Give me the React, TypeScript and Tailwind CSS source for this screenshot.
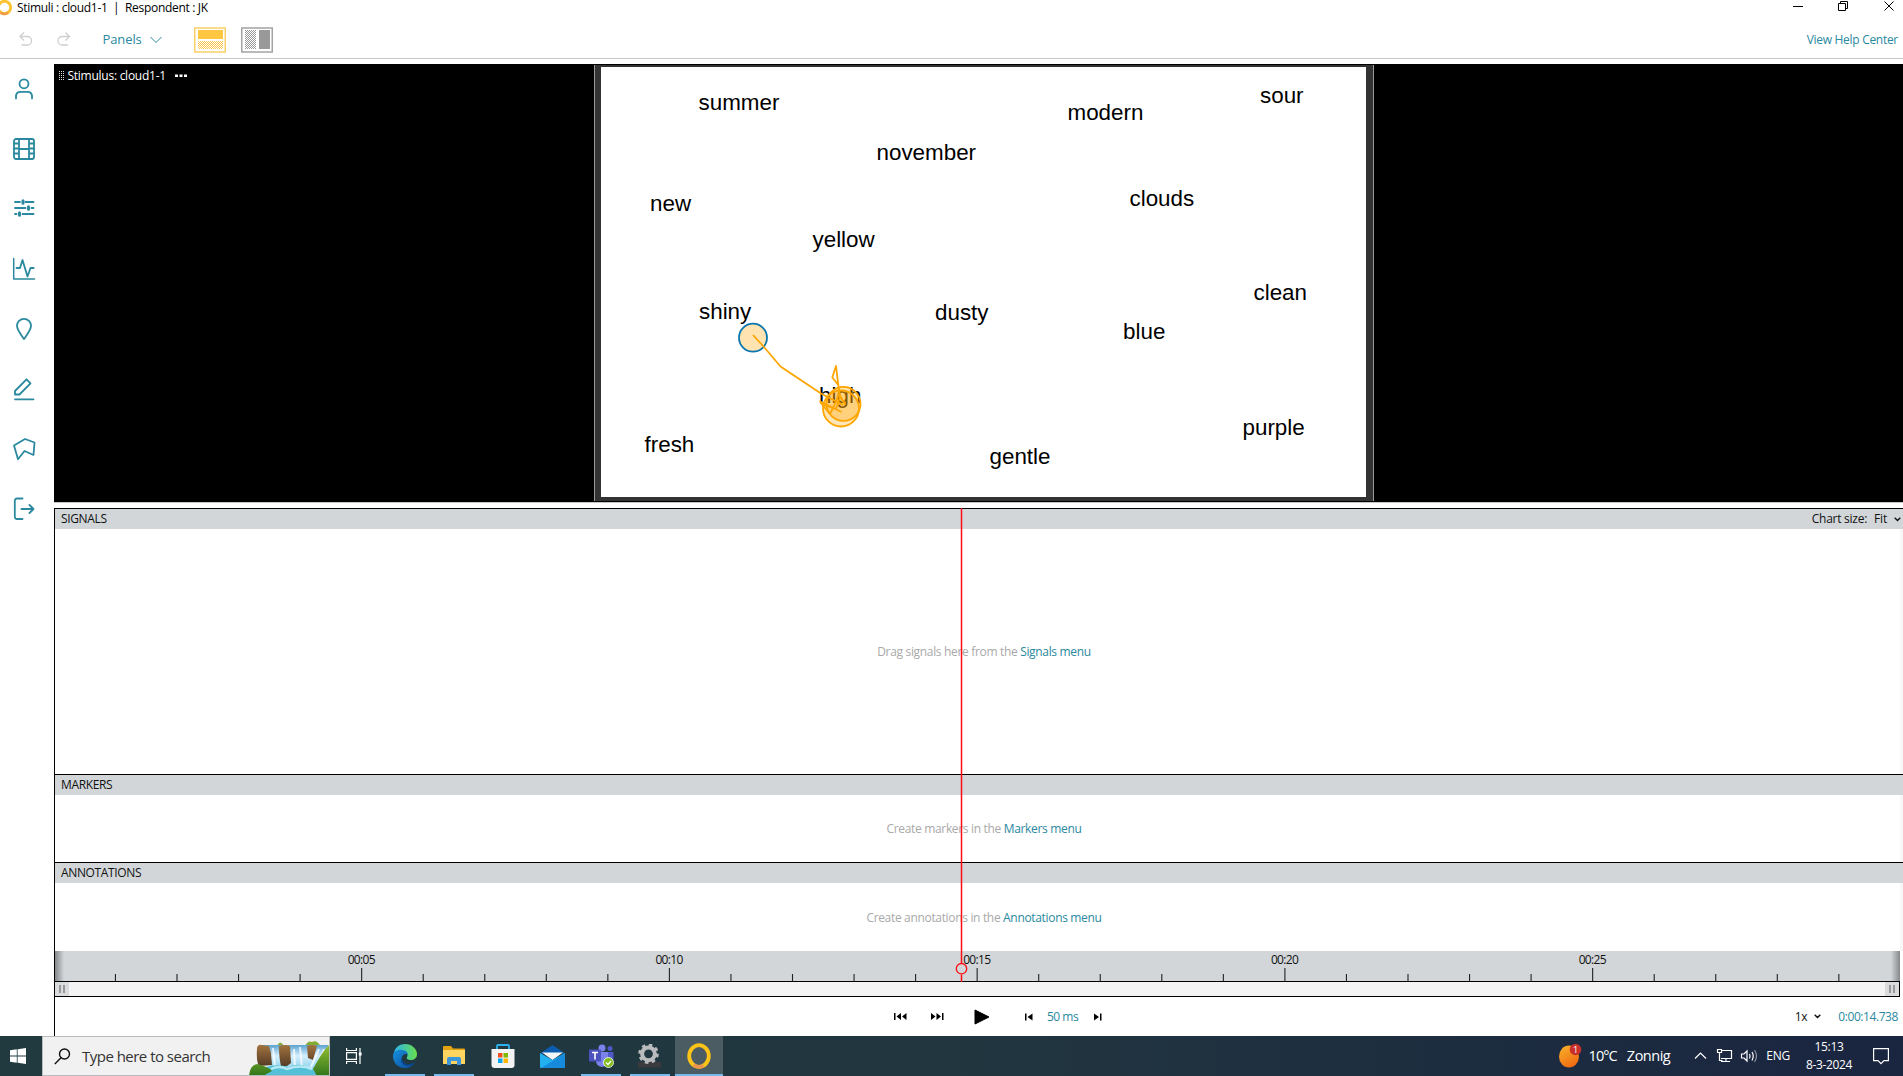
import type { ReactNode } from "react";

const WORDS = [
  { text: "summer", x: 97.5, y: 25 },
  { text: "modern", x: 466.5, y: 34.5 },
  { text: "sour", x: 659, y: 17.5 },
  { text: "november", x: 275.5, y: 75 },
  { text: "new", x: 49, y: 126 },
  { text: "clouds", x: 528.5, y: 121 },
  { text: "yellow", x: 211.5, y: 162 },
  { text: "clean", x: 652.5, y: 215 },
  { text: "shiny", x: 98, y: 234 },
  { text: "dusty", x: 334, y: 235 },
  { text: "blue", x: 522, y: 254 },
  { text: "high", x: 218, y: 318 },
  { text: "purple", x: 641.5, y: 350 },
  { text: "fresh", x: 43.5, y: 367 },
  { text: "gentle", x: 388.5, y: 379 },
];

function SideIcon({ children }: { children: ReactNode }) {
  return (
    <button className="flex h-[60px] w-12 items-center justify-center">
      <svg width="24" height="24" viewBox="0 0 24 24" fill="none" stroke="#2a899e" strokeWidth="1.8" strokeLinejoin="round" strokeLinecap="round">
        {children}
      </svg>
    </button>
  );
}

function Sidebar() {
  return (
    <nav className="flex w-[54px] shrink-0 flex-col">
      <SideIcon>
        <circle cx="12" cy="6.8" r="4.5" />
        <path d="M4 21.500v-3a4.500 4.500 0 0 1 4.500-3.700h7a4.500 4.500 0 0 1 4.500 3.700v3" />
      </SideIcon>
      <SideIcon>
        <rect x="2" y="2" width="20" height="20" rx="2" />
        <path d="M7 2v20M17 2v20M7 12h10M2 6.500h5M2 11.500h5M2 16.500h5M17 6.500h5M17 11.500h5M17 16.500h5" />
      </SideIcon>
      <SideIcon>
        <path d="M3 5h5M13.500 5H21.500M3 11H13.500M19.500 11H21.500M3 17H4.500M10.500 17H21.500" />
        <path d="M11 3.700v2.600M16.500 9.700v2.600M7.500 15.700v2.600" strokeWidth="3" />
      </SideIcon>
      <SideIcon>
        <path d="M1.700 1.500V22H22.500" strokeWidth="1.500" />
        <path d="M4.500 11h3.500L10.500 3l5 16.500L18.500 11h3.200" />
      </SideIcon>
      <SideIcon>
        <path d="M12 22C9 17.500 5 13 5 8.800a7 7 0 0 1 14 0C19 13 15 17.500 12 22Z" />
      </SideIcon>
      <SideIcon>
        <path d="M3 22.300h18.500M3 17.500v-3.500L14.500 2.300l4 4L7.500 17.500Z" />
      </SideIcon>
      <SideIcon>
        <path d="M2 8.500 13 2l9.500 3.500L21.500 18l-9-4L6 22.200Z" />
      </SideIcon>
      <SideIcon>
        <path d="M10.500 1.500H5a2.200 2.200 0 0 0-2.200 2.200v16A2.200 2.200 0 0 0 5 22h5.500M9.500 12h12M17.500 8l4 4-4 4" />
      </SideIcon>
    </nav>
  );
}

function Header() {
  return (
    <header className="h-[59px] border-b border-[#c8c8c8]">
      <div className="flex h-4 items-center text-[12px] leading-4 text-black">
        <svg className="-ml-1 shrink-0" width="17" height="16" viewBox="0 0 17 16" fill="none">
          <circle cx="8.500" cy="7.500" r="6.200" stroke="#fcc332" strokeWidth="3" />
          <path d="M4.500 12.500a6.200 6.200 0 0 0 7.500 0" stroke="#f39b45" strokeWidth="2.500" />
        </svg>
        <span className="ml-1 whitespace-pre tracking-[-0.31px]">Stimuli : cloud1-1  |  Respondent : JK</span>
        <svg className="ml-auto" width="110" height="16" viewBox="0 0 110 16" fill="none" stroke="#000">
          <path d="M0 6.500h10M45.500 3.500h7v7h-7zM47.500 3.500v-2h7v7h-2M91.500 1.500l9 9M100.500 1.500l-9 9" />
        </svg>
      </div>
      <div className="flex h-[42px] items-center pt-[5px] text-[13px] text-[#2a899e]">
        <svg className="ml-[18px]" width="54" height="18" viewBox="0 0 54 18" fill="none" stroke="#cfcfcf" strokeWidth="1.300">
          <path d="M6 1.500 2 5.500l4 4M2 5.500h7.500a4 4 0 0 1 4 4v.5a4 4 0 0 1-4 4H3.500M47.500 1.500l4 4-4 4M51.500 5.500H44a4 4 0 0 0-4 4v.5a4 4 0 0 0 4 4h6" />
        </svg>
        <span className="ml-[30.500px] w-[39px] tracking-[-0.1px]">Panels</span>
        <svg className="ml-2" width="12" height="8" viewBox="0 0 12 8" fill="none" stroke="#2a899e">
          <path d="m.5 1 5.500 5.500L11.500 1" />
        </svg>
        <svg className="ml-[32.500px]" width="79" height="26" viewBox="0 0 79 26">
          <defs>
            <pattern id="y" width="2" height="2" patternUnits="userSpaceOnUse">
              <path fill="#fdc54a" d="M0 0h1v1H0zM1 1h1v1H1z" />
            </pattern>
            <pattern id="g" width="2" height="2" patternUnits="userSpaceOnUse">
              <path fill="#999" d="M0 0h1v1H0zM1 1h1v1H1z" />
            </pattern>
          </defs>
          <rect x=".75" y="1" width="30.500" height="24" fill="#fff" stroke="#fbcf67" strokeWidth="1.500" />
          <path fill="#ffc642" d="M4 3h25v9H4z" />
          <path fill="url(#y)" d="M4 14h25v8H4z" />
          <rect x="47.750" y="1" width="30.500" height="24" fill="#fff" stroke="#a3a3a3" strokeWidth="1.500" />
          <path fill="url(#g)" d="M51 3h11v19H51z" />
          <path fill="#999" d="M65 3h11v19H65z" />
        </svg>
        <span className="ml-auto mr-[5px] text-[12px] tracking-[-0.29px]">View Help Center</span>
      </div>
    </header>
  );
}

function Gaze() {
  return (
    <svg className="absolute inset-0" width="765" height="430" viewBox="601 67 765 430" fill="none" stroke="#ffa500" strokeWidth="1.800">
      <circle cx="753" cy="337.700" r="14" fill="#ffa500" fillOpacity=".3" stroke="#0b76ae" />
      <circle cx="841" cy="408.500" r="18" fill="#ffa500" fillOpacity=".28" />
      <circle cx="843.500" cy="403.800" r="17" fill="#ffa500" fillOpacity=".32" />
      <path d="M753 335l11 12 16.500 19.500L821 393.500 843 405M819.500 401l22 11M836 366l-3.700 11.500 6 7.500zM838.300 385l2 12 5 8M820 402l10 12 4-8 5-12 6 10M824 405l12 4 4-12" strokeLinejoin="round" />
    </svg>
  );
}

function Stimulus() {
  return (
    <section className="flex h-[439px] border-b border-[#c4c4c4] bg-black">
      <div className="flex h-6 w-[540px] items-center pl-[5px] text-[12px] text-white">
        <svg width="6" height="10" viewBox="0 0 6 10" stroke="#ddd" strokeDasharray="1 1">
          <path d="M.5 0v10M2.500 0v10M4.500 0v10" />
        </svg>
        <span className="ml-[2.500px] tracking-[-0.26px]">Stimulus: cloud1-1</span>
        <svg className="ml-[9.500px]" width="12" height="4" viewBox="0 0 12 4" fill="#fff">
          <path d="M0 .5h3v2.500H0zM4.500 .5h3v2.500h-3zM9 .5h3v2.500H9z" />
        </svg>
      </div>
      <div className="mt-px h-[436px] w-[780px] border-x border-[#9a9a9a] bg-[#333] px-[6px] pt-[2px]">
        <div className="relative h-[430px] w-[765px] bg-white">
          {WORDS.map((w) => (
            <span
              key={w.text}
              className="absolute font-['Liberation_Sans',Arial,sans-serif] text-[22.4px] leading-[22px] text-black"
              style={{ left: w.x, top: w.y }}
            >
              {w.text}
            </span>
          ))}
          <Gaze />
        </div>
      </div>
    </section>
  );
}

function Panel({ title, hint, link, size, right }: { title: string; hint: string; link: string; size: string; right?: ReactNode }) {
  return (
    <section className={"flex flex-col border-t border-black " + size}>
      <div className="flex h-5 shrink-0 items-center bg-[#d2d6d9] pl-[6px] text-[12px] text-[#111]">
        <span className="tracking-[-0.35px]">{title}</span>
        {right}
      </div>
      <div className="flex flex-1 items-center justify-center border-r-3 border-[#f7f7f7] pl-[13px] pt-px text-[12px] text-[#a9a9a9]">
        <p className="whitespace-pre tracking-[-0.33px]">
          {hint}
          <span className="text-[#2a899e]">{link}</span>
        </p>
      </div>
    </section>
  );
}

function Ruler() {
  const ticks = Array.from({ length: 29 }, (_, i) => i + 1);
  return (
    <div className="mr-[3px] h-[31px] border-b border-black bg-[#d2d6d9]">
      <svg width="1845" height="30" viewBox="55 951 1845 30" className="block">
        <defs>
          <linearGradient id="fl">
            <stop offset="0" stopColor="#85878a" />
            <stop offset="1" stopColor="#d2d6d9" />
          </linearGradient>
          <linearGradient id="fr">
            <stop offset="0" stopColor="#d2d6d9" />
            <stop offset="1" stopColor="#85878a" />
          </linearGradient>
        </defs>
        <rect x="55" y="951" width="9" height="30" fill="url(#fl)" />
        <rect x="1891" y="951" width="9" height="30" fill="url(#fr)" />
        {ticks.map((n) => {
          const x = 53.9 + 61.55 * n;
          const major = n % 5 === 0;
          return (
            <g key={n}>
              <path d={`M${x} ${major ? 968 : 974}V981`} stroke="#222" strokeWidth="1.100" />
              {major && (
                <text x={x} y="963.700" fontSize="12" fill="#111" textAnchor="middle" textLength="28">
                  {"00:" + String(n).padStart(2, "0")}
                </text>
              )}
            </g>
          );
        })}
      </svg>
    </div>
  );
}

function Grip() {
  return (
    <div className="flex h-full w-[14px] items-center justify-center gap-[2px] bg-[#d9dbdd]">
      <i className="h-2 w-[2px] bg-[#999]" />
      <i className="h-2 w-[2px] bg-[#999]" />
    </div>
  );
}

function Chevron({ className }: { className: string }) {
  return (
    <svg className={className} width="7" height="5" viewBox="0 0 7 5" fill="none" stroke="#111" strokeWidth="1.400">
      <path d="m.7 .8 2.800 2.800L6.300 .8" />
    </svg>
  );
}

function Playback() {
  return (
    <div className="flex h-[39px] items-center pr-[5px] text-[12px] text-[#2a899e]">
      <div className="flex items-center pl-[839px]">
        <svg width="51" height="10" viewBox="0 0 51 10" fill="#000">
          <path d="M0 1h1.500v7H0zM7 1v7L2.500 4.500zM12.500 1v7L8 4.500zM37 1v7l4.500-3.500zM42.500 1v7l4.500-3.500zM48 1h1.500v7H48z" />
        </svg>
        <svg className="ml-[29px]" width="16" height="16" viewBox="0 0 16 16">
          <path d="M1 1v14l14-7z" stroke="#000" strokeLinejoin="round" />
        </svg>
        <svg className="ml-[35px]" width="8" height="8" viewBox="0 0 8 8">
          <path d="M0 .5h1.500v7H0zM7.500 .5v7L2.500 4z" />
        </svg>
        <span className="ml-[14px] w-[32px] whitespace-nowrap tracking-[-0.5px]">50 ms</span>
        <svg className="ml-[15px]" width="8" height="8" viewBox="0 0 8 8">
          <path d="M6 .5h1.500v7H6zM0 .5v7L5 4z" />
        </svg>
      </div>
      <span className="ml-auto tracking-[-0.3px] text-[#111]">1x</span>
      <Chevron className="ml-[7px]" />
      <span className="ml-[17px] tracking-[-0.42px]">0:00:14.738</span>
    </div>
  );
}

function Task({ open, active, children }: { open?: boolean; active?: boolean; children: ReactNode }) {
  return (
    <div
      className={
        "flex h-10 items-center justify-center border-y-2 " +
        (open || active ? "border-b-[#76b9ed] " : "border-b-transparent ") +
        (active ? "ml-[5px] w-12 border-t-[#4c5c63] bg-[#4c5c63]" : "mr-[9px] w-10 border-t-transparent")
      }
    >
      {children}
    </div>
  );
}

function Waterfall() {
  return (
    <svg width="80" height="38" viewBox="0 1 80 38">
      <defs>
        <linearGradient id="wf" x2="0" y2="1">
          <stop stopColor="#5ba3cf" />
          <stop offset=".4" stopColor="#d5efff" />
          <stop offset="1" stopColor="#7fcbe6" />
        </linearGradient>
        <linearGradient id="rk" x2="0" y2="1">
          <stop stopColor="#a3733f" />
          <stop offset="1" stopColor="#553c26" />
        </linearGradient>
        <linearGradient id="gr" x2="0" y2="1">
          <stop stopColor="#94bf31" />
          <stop offset="1" stopColor="#31751c" />
        </linearGradient>
      </defs>
      <path d="M28 10q3-7 7 0M56 10q3-6 7-4 5-3 9 5" fill="#86ab35" />
      <path d="M11 9h68v27H25z" fill="url(#wf)" />
      <path d="M8 12q1-4 5-3l7 1 2 7 1 12-13 1q-3-5-2-18zM30 10q6-2 11 0l1 17-4 3h-6q-2-8-2-20zM58 10q5-2 10 0l-4 14-5-2z" fill="url(#rk)" />
      <path d="M24 12l2 19M45 13l1 19M51 11l2 21M70 13l-8 18M75 13l-6 17" stroke="#fff" strokeWidth="2" opacity=".75" />
      <path d="M2 40q16-15 38-9 16-7 31 9z" fill="#54c0d8" />
      <path d="M22 33q8-4 16 0 13-5 25 0" stroke="#e0faff" strokeWidth="2.500" fill="none" opacity=".7" />
      <path d="M0 40q1-11 8-12 12 3 15 7L14 40zM64 33q9-17 16-24v31H68z" fill="url(#gr)" />
    </svg>
  );
}

function Taskbar() {
  return (
    <footer className="flex h-10 bg-linear-to-r from-[#213a40] via-[#21363f] via-50% to-[#1a2540] text-white">
      <div className="flex w-[42px] items-center pl-[10px]">
        <svg width="16" height="16" viewBox="0 0 16 16" fill="#fff">
          <path d="M0 2.300 6.800 1.300V7.600H0zM7.600 1.200 16 0v7.600H7.600zM0 8.400h6.800v6.300L0 13.700zM7.600 8.400H16V16l-8.400-1.200z" />
        </svg>
      </div>
      <div className="flex w-[288px] items-center border border-[#b9bcbd] bg-[#f1f1f1] pl-[11px]">
        <svg width="17" height="17" viewBox="0 0 17 17" fill="none" stroke="#111" strokeWidth="1.400">
          <circle cx="10.500" cy="6" r="5" />
          <path d="M7 9.800.8 16" />
        </svg>
        <span className="ml-[11px] text-[15px] tracking-[-0.52px] text-[#333]">Type here to search</span>
        <div className="ml-auto">
          <Waterfall />
        </div>
      </div>
      <div className="flex w-[55px] items-center pl-4">
        <svg width="16" height="16" viewBox="0 0 16 16" fill="none" stroke="#fff" strokeWidth="1.200">
          <path d="M.6 0v2.500h9.800V0M.6 4.600h9.800v6.800H.6zM.6 16v-2.500h9.800V16M14 0v16" />
          <path d="M12.800 4.500h2.800v3h-2.800z" fill="#fff" stroke="none" />
        </svg>
      </div>
      <Task open>
        <svg width="24" height="24" viewBox="0 0 24 24">
          <defs>
            <linearGradient id="e1" x2="1">
              <stop stopColor="#2bb5ea" />
              <stop offset="1" stopColor="#68e04c" />
            </linearGradient>
            <linearGradient id="e2" x2="1" y2="1">
              <stop stopColor="#1690dd" />
              <stop offset="1" stopColor="#0c4b9c" />
            </linearGradient>
          </defs>
          <path d="M1 9C2 3 7 0 12 0c7 0 12 5 12 10 0 4-3 6-6 6-3 0-5-1-4-3 1-1 1-6-4-6-4 0-7 1-9 3z" fill="url(#e1)" />
          <path d="M0 12c0-5 5-7 9-6 4 0 6 3 6 5-2-2-5-1-6 2-1 5 4 8 8 7 2 0 4-1 5-2-2 4-6 6-10 6C5 24 0 19 0 12z" fill="url(#e2)" />
          <path d="M9 13c-1 5 4 8 8 7 2 0 4-1 5-2l-2 3c-9 3-14-3-11-8z" fill="#0b3f88" />
        </svg>
      </Task>
      <Task open>
        <svg width="22" height="20" viewBox="0 0 22 20">
          <path d="M0 1q0-1 1-1h7l2 2.500h11q1 0 1 1V18H0z" fill="#e5a313" />
          <path d="M0 4h22v13q0 1-1 1H1q-1 0-1-1z" fill="#ffd55f" />
          <path d="M4 19v-6q0-2 2-2h10q2 0 2 2v6h-4v-4H8v4z" fill="#3d95dc" />
        </svg>
      </Task>
      <Task>
        <svg width="24" height="24" viewBox="0 0 24 24">
          <path d="M6 6V2q0-1 1-1h10q1 0 1 1v4" fill="none" stroke="#29b1f0" strokeWidth="1.800" />
          <path d="M.5 5h23v16q0 3-3 3h-17q-3 0-3-3z" fill="#f3f3f3" />
          <path d="M7 9h4.500v4.500H7z" fill="#f25022" />
          <path d="M12.500 9H17v4.500h-4.500z" fill="#7fba00" />
          <path d="M7 14.500h4.500V19H7z" fill="#00a4ef" />
          <path d="M12.500 14.500H17V19h-4.500z" fill="#ffb900" />
        </svg>
      </Task>
      <Task>
        <svg width="25" height="23" viewBox="0 0 25 23">
          <path d="M0 8.500 12.500 0 25 8.500z" fill="#0b5cae" />
          <path d="M2 7.500h21L12.500 15z" fill="#f4f7fa" />
          <path d="M0 8 12.500 15 25 8V22q0 1-1 1H1q-1 0-1-1z" fill="#23b0f0" />
          <path d="M1 23 25 8.500V22q0 1-1 1z" fill="#168bdd" />
        </svg>
      </Task>
      <Task open>
        <svg width="25" height="24" viewBox="0 0 25 24">
          <circle cx="13" cy="4" r="3.500" fill="#7b83eb" />
          <circle cx="21" cy="4.500" r="2.500" fill="#5059c9" />
          <path d="M7 8h12v9q0 5-6 6-6-1-6-6z" fill="#7b83eb" />
          <path d="M19 8h5.500v7q-1 4-5.500 3z" fill="#5059c9" />
          <path d="M0 5.500h12v12H0z" fill="#4b53bc" />
          <path d="M3 8.500h6M6 8.500v7" stroke="#fff" strokeWidth="1.600" />
          <circle cx="19.500" cy="18.500" r="5" fill="#83bd1d" stroke="#fff" strokeWidth=".8" />
          <path d="m17 18.500 2 2 3-3.500" fill="none" stroke="#fff" strokeWidth="1.300" />
        </svg>
      </Task>
      <div className="-mr-[9px]">
        <Task open>
          <svg width="24" height="24" viewBox="0 0 24 24" className="mr-0.5">
            <path d="M1 18h23v5.500H1z" fill="#3b3b3d" />
            <circle cx="11.500" cy="9.800" r="8.800" fill="none" stroke="#b9bbbd" strokeWidth="3" strokeDasharray="3.450 3.460" />
            <circle cx="11.500" cy="9.800" r="6.400" fill="none" stroke="#b9bbbd" strokeWidth="4" />
          </svg>
        </Task>
      </div>
      <Task active>
        <svg width="24" height="26" viewBox="0 0 24 26" fill="none">
          <ellipse cx="12" cy="13" rx="9.800" ry="10.800" stroke="#fcc419" strokeWidth="3.800" />
          <path d="M6.500 22a9.800 9.800 0 0 0 10 .8" stroke="#ef9151" strokeWidth="3.200" />
        </svg>
      </Task>
      <div className="ml-auto flex items-center pr-[14px] text-[14.500px]">
        <svg width="24" height="26" viewBox="0 0 24 26">
          <defs>
            <linearGradient id="sun" x2=".6" y2="1">
              <stop stopColor="#f6b62c" />
              <stop offset="1" stopColor="#f26a12" />
            </linearGradient>
          </defs>
          <ellipse cx="11" cy="13.500" rx="10" ry="11" fill="url(#sun)" />
          <circle cx="17.500" cy="6.500" r="5.800" fill="#c9302c" />
          <text x="17.500" y="10" fontSize="9" fill="#fff" textAnchor="middle">1</text>
        </svg>
        <span className="ml-[7px] tracking-[-0.9px]">10°C</span>
        <span className="ml-[10px] tracking-[-0.5px]">Zonnig</span>
        <svg className="ml-6" width="64" height="16" viewBox="0 0 64 16" fill="none" stroke="#fff" strokeWidth="1.200">
          <path d="m1 10.500 5.500-5.500 5.500 5.500M27 2.500h10.500v8H27M31 13.500h-4M23.500 1.500h4v3h-4zM25.500 4.500v8h3M32 10.500v3h-4M30 13.500h6" />
          <path d="M47.500 6h2.500l3-3v10l-3-3h-2.500zM55.500 6q1.200 2 0 4.500M58 4q2.500 4 0 8.500" />
          <path d="M60.500 2q4 6 0 12" opacity=".5" />
        </svg>
        <span className="ml-2 text-[12px] tracking-[-0.2px]">ENG</span>
        <div className="ml-[15px] flex w-[48px] flex-col items-center text-[12px] leading-[18px] tracking-[-0.35px]">
          <span>15:13</span>
          <span>8-3-2024</span>
        </div>
        <svg className="ml-5" width="16" height="17" viewBox="0 0 16 17" fill="none" stroke="#fff" strokeWidth="1.200">
          <path d="M.6.6h14.800v12H11l-3 3-3-3H.6z" />
        </svg>
      </div>
    </footer>
  );
}

export default function App() {
  return (
    <div className="flex h-[1076px] w-[1903px] flex-col overflow-hidden bg-white font-['Open_Sans','Noto_Sans',sans-serif]">
      <Header />
      <div className="flex h-[977px]">
        <Sidebar />
        <main className="flex min-w-0 flex-1 flex-col pt-[5px]">
          <Stimulus />
          <div className="relative mt-[5px] flex flex-1 flex-col border-l border-black">
            <Panel
              title="SIGNALS"
              hint="Drag signals here from the "
              link="Signals menu"
              size="h-[266px]"
              right={
                <>
                  <span className="ml-auto tracking-[-0.26px]">Chart size:</span>
                  <span className="ml-[7px] tracking-[-0.2px]">Fit</span>
                  <Chevron className="ml-[7px] mr-[2px]" />
                </>
              }
            />
            <Panel title="MARKERS" hint="Create markers in the " link="Markers menu" size="h-[88px]" />
            <Panel title="ANNOTATIONS" hint="Create annotations in the " link="Annotations menu" size="h-[89px]" />
            <Ruler />
            <div className="mr-[3px] flex h-[15px] justify-between border-b border-r border-black bg-[#f4f4f4]">
              <Grip />
              <Grip />
            </div>
            <Playback />
            <svg className="absolute left-[899px] top-0" width="16" height="474" viewBox="0 -2 16 474" fill="none" stroke="#ff0d14">
              <path d="M7.500 -2v455M7.500 464.500V472" strokeWidth="1.500" />
              <circle cx="7.500" cy="458.700" r="5.200" strokeWidth="1.300" />
            </svg>
          </div>
        </main>
      </div>
      <Taskbar />
    </div>
  );
}
